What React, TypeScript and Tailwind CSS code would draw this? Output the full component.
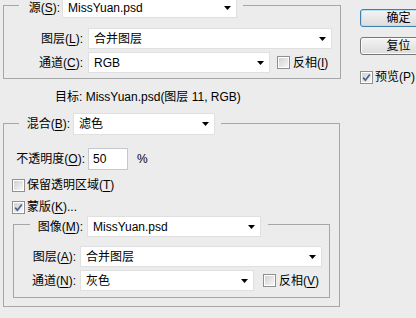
import React from "react";

function Arrow() {
  return (
    <svg width="7" height="4" viewBox="0 0 7 4" className="shrink-0">
      <polygon points="0,0 7,0 3.5,4" fill="#000" />
    </svg>
  );
}

function Select({ cls, children }: { cls: string; children: React.ReactNode }) {
  return (
    <div className={`flex items-center bg-white border border-[#e0e0e0] pl-[5px] pr-[5px] shrink-0 ${cls}`}>
      <span className="flex-1 whitespace-nowrap overflow-hidden">{children}</span>
      <Arrow />
    </div>
  );
}

function Check({ checked }: { checked?: boolean }) {
  return (
    <div className="w-[13px] h-[13px] border border-[#8f8f8f] bg-white p-[1px] shrink-0">
      <div className="w-full h-full bg-linear-to-br from-[#d2d2d2] to-[#f6f6f6]">
        {checked && (
          <svg width="9" height="9" viewBox="0 0 9 9" className="block">
            <path d="M1.2 4.6 L3.4 7.2 L7.8 1.4" fill="none" stroke="#4a5f8e" strokeWidth="1.7" />
          </svg>
        )}
      </div>
    </div>
  );
}

function U({ children }: { children: React.ReactNode }) {
  return <span className="underline underline-offset-[2px]">{children}</span>;
}

export default function App() {
  return (
    <div className="w-[416px] h-[318px] overflow-hidden bg-[#ececec] text-[12px] leading-[16px] text-black font-['Liberation_Sans','Noto_Sans_CJK_SC',sans-serif] flex">
      {/* Left column */}
      <div className="w-[343px] shrink-0 pl-[3px] -mt-[3px] flex flex-col">
        {/* Source group */}
        <div className="w-[338px] flex flex-col">
          <div className="flex h-[21px]">
            <div className="w-[16px] mt-[8px] border-t border-l border-[#a6a6a6]" />
            <div className="w-[43px] flex items-center justify-end pr-[2px]">
              源(<U>S</U>):
            </div>
            <Select cls="w-[175px] h-[21px]">MissYuan.psd</Select>
            <div className="flex-1 ml-[6px] mt-[8px] border-t border-r border-[#a6a6a6]" />
          </div>
          <div className="border-l border-r border-b border-[#a6a6a6] pt-[10px] pb-[5px] flex flex-col gap-[3px]">
            <div className="flex items-center h-[21px]">
              <div className="w-[80px] text-right pr-[1px]">
                图层(<U>L</U>):
              </div>
              <div className="ml-[4px]">
                <Select cls="w-[244px] h-[21px]">合并图层</Select>
              </div>
            </div>
            <div className="flex items-center h-[21px]">
              <div className="w-[80px] text-right pr-[1px]">
                通道(<U>C</U>):
              </div>
              <div className="ml-[4px]">
                <Select cls="w-[182px] h-[21px]">RGB</Select>
              </div>
              <div className="ml-[7px]">
                <Check />
              </div>
              <div className="ml-[3px]">
                反相(<U>I</U>)
              </div>
            </div>
          </div>
        </div>

        {/* Target */}
        <div className="mt-[10px] pl-[52px] h-[16px] whitespace-nowrap">
          目标: MissYuan.psd(图层 11, RGB)
        </div>

        {/* Blend group */}
        <div className="mt-[8px] w-[337px] flex flex-col">
          <div className="flex h-[22px]">
            <div className="w-[16px] mt-[10px] border-t border-l border-[#a6a6a6]" />
            <div className="w-[54px] flex items-center justify-end pr-[3px]">
              混合(<U>B</U>):
            </div>
            <Select cls="w-[142px] h-[22px]">滤色</Select>
            <div className="flex-1 ml-[6px] mt-[10px] border-t border-r border-[#a6a6a6]" />
          </div>
          <div className="border-l border-r border-b border-[#a6a6a6] pt-[13px] pb-[8px] flex flex-col">
            {/* opacity */}
            <div className="flex items-center h-[22px]">
              <div className="w-[81px] text-right whitespace-nowrap">
                不透明度(<U>O</U>):
              </div>
              <div className="ml-[3px] w-[40px] h-[22px] bg-white border border-[#c5c8cf] pl-[4px] flex items-center">
                50
              </div>
              <div className="ml-[9px]">%</div>
            </div>
            {/* preserve transparency */}
            <div className="mt-[7px] h-[16px] pl-[8px] flex items-center">
              <Check />
              <div className="ml-[2px]">
                保留透明区域(<U>T</U>)
              </div>
            </div>
            {/* mask */}
            <div className="mt-[6px] h-[16px] pl-[8px] flex items-center">
              <Check checked />
              <div className="ml-[2px]">
                蒙版(<U>K</U>)...
              </div>
            </div>
            {/* inner mask group */}
            <div className="mt-[1px] ml-[9px] w-[317px] flex flex-col">
              <div className="flex h-[21px]">
                <div className="w-[17px] mt-[8px] border-t border-l border-[#a6a6a6]" />
                <div className="w-[57px] flex items-center justify-end pr-[4px]">
                  图像(<U>M</U>):
                </div>
                <Select cls="w-[174px] h-[21px]">MissYuan.psd</Select>
                <div className="flex-1 ml-[7px] mt-[8px] border-t border-r border-[#a6a6a6]" />
              </div>
              <div className="border-l border-r border-b border-[#a6a6a6] pt-[9px] pb-[6px] flex flex-col gap-[3px]">
                <div className="flex items-center h-[21px]">
                  <div className="w-[62px] text-right">
                    图层(<U>A</U>):
                  </div>
                  <div className="ml-[4px]">
                    <Select cls="w-[242px] h-[21px]">合并图层</Select>
                  </div>
                </div>
                <div className="flex items-center h-[21px]">
                  <div className="w-[62px] text-right">
                    通道(<U>N</U>):
                  </div>
                  <div className="ml-[4px]">
                    <Select cls="w-[174px] h-[21px]">灰色</Select>
                  </div>
                  <div className="ml-[9px]">
                    <Check />
                  </div>
                  <div className="ml-[3px]">
                    反相(<U>V</U>)
                  </div>
                </div>
              </div>
            </div>
          </div>
        </div>
      </div>

      {/* Right column */}
      <div className="ml-[17px] shrink-0 pt-[9px] flex flex-col">
        <div className="w-[77px] h-[18px] rounded-[3px] border border-[#3c7fb1] bg-linear-to-b from-[#f4f4f4] to-[#dcdcdc] shadow-[inset_0_0_0_1px_#b6e0f5] flex items-center justify-center">
          确定
        </div>
        <div className="mt-[10px] w-[77px] h-[18px] rounded-[3px] border border-[#777777] bg-linear-to-b from-[#f4f4f4] to-[#dcdcdc] shadow-[inset_0_0_0_1px_#fbfbfb] flex items-center justify-center">
          复位
        </div>
        <div className="mt-[14px] h-[16px] flex items-center">
          <Check checked />
          <div className="ml-[2px] whitespace-nowrap">预览(P)</div>
        </div>
      </div>
    </div>
  );
}
